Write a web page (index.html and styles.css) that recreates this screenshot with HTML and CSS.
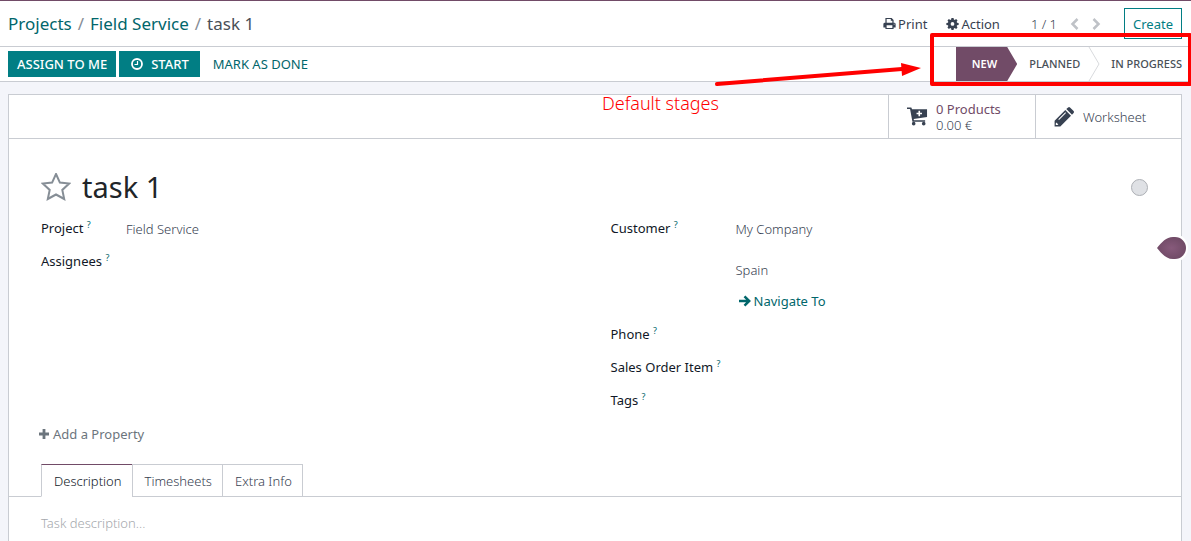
FILE: index.html
```html
<!DOCTYPE html>
<html lang="en">
<head>
<meta charset="utf-8">
<meta name="viewport" content="width=device-width, initial-scale=1">
<title>task 1 - Field Service</title>
<link rel="stylesheet" href="styles.css">
</head>
<body>
<header class="control-panel">
  <nav class="breadcrumb" aria-label="Breadcrumb">
    <a href="#">Projects</a><span class="sep">/</span><a href="#">Field Service</a><span class="sep">/</span><span class="current">task 1</span>
  </nav>
  <div class="panel-actions">
    <button class="plain print" type="button">
      <svg class="icon gear" viewBox="0 0 14 14" aria-hidden="true"><path fill="currentColor" fill-rule="evenodd" d="M2.6 1h6.700l2.100 2.100v3h.6a1.600 1.600 0 0 1 1.600 1.600v3.700h-2.200V13H2.600v-1.600H.4V7.700A1.600 1.600 0 0 1 2 6.100h.6zM3.900 2.200v4h6.200V4H8.400V2.200zM3.900 9v2.800h6.200V9zM11.500 7.200v1h1v-1z"/></svg>
      Print
    </button>
    <button class="plain action" type="button">
      <svg class="icon gear" viewBox="0 0 14 14" aria-hidden="true"><path fill="currentColor" fill-rule="evenodd" d="M5.900 1h2.200l.4 1.700.9.400 1.500-.9 1.500 1.500-.9 1.500.4.900 1.700.3v2.200l-1.700.3-.4.900.9 1.500-1.500 1.500-1.500-.9-.9.400-.4 1.700H5.900l-.4-1.700-.9-.4-1.500.9-1.500-1.500.9-1.500-.4-.9L.4 8.600V6.400l1.700-.3.4-.9-.9-1.500 1.500-1.500 1.500.9.900-.4zM7 5.500a2 2 0 1 0 0 4 2 2 0 0 0 0-4z"/></svg>
      Action
    </button>
    <span class="pager">1 / 1</span>
    <button class="plain arrow" type="button" aria-label="Previous"><svg viewBox="0 0 10 14"><path d="M7.500 2 2.500 7l5 5" /></svg></button>
    <button class="plain arrow" type="button" aria-label="Next"><svg viewBox="0 0 10 14"><path d="m2.500 2 5 5-5 5" /></svg></button>
    <button class="create" type="button">Create</button>
  </div>
</header>

<div class="statusbar">
  <div class="buttons">
    <button class="primary" type="button">ASSIGN TO ME</button>
    <button class="primary start" type="button">
      <svg class="icon" viewBox="0 0 14 14" aria-hidden="true"><g fill="none" stroke="currentColor"><circle cx="7" cy="7" r="5" stroke-width="1.800"/><path d="M7.500 4v3.500H4.500" stroke-width="1.200"/></g></svg>
      START
    </button>
    <button class="link" type="button">MARK AS DONE</button>
  </div>
  <div class="stages">
    <button class="stage active" type="button">NEW</button>
    <button class="stage" type="button">PLANNED</button>
    <svg class="divider" viewBox="0 0 12 34" aria-hidden="true"><path d="M1 0l10 17L1 34" fill="none" stroke="#d8dadd"/></svg>
    <button class="stage last" type="button">IN PROGRESS</button>
  </div>
</div>

<main class="sheet">
  <div class="button-box">
    <button class="stat products" type="button">
      <svg class="cart" viewBox="0 0 22 20" aria-hidden="true"><path fill="currentColor" fill-rule="evenodd" d="M0 0h4.500l.8 2H21v8L7 12l.3 1.500H19V15H5.700L3.200 1.600H0zM12 3.500v2H10v1.700h2v2h1.700v-2h2V5.500h-2v-2z"/><circle cx="7" cy="17" r="1.900" fill="currentColor"/><circle cx="17.500" cy="17" r="1.900" fill="currentColor"/></svg>
      <span class="stat-text"><span class="accent">0 Products</span><span>0.00 €</span></span>
    </button>
    <button class="stat worksheet" type="button">
      <svg class="pencil" viewBox="0 0 20 20" aria-hidden="true"><path fill="currentColor" fill-rule="evenodd" d="M11.300 3l5.700 5.700L6.300 19.400H.6v-5.700zM2.300 15.500l-.5 1.100v1.500h1.500l1.100-.5zM11.300 5.300l-7 7 .7.700 7-7zM12.300 2L14.100.4q1-.8 1.900 0l3.600 3.600q.8.900 0 1.900L18 7.700z"/></svg>
      Worksheet
    </button>
  </div>

  <div class="content">
    <div class="title-row">
      <button class="plain star" type="button" aria-label="Priority"><svg viewBox="0 0 30 28"><path d="M15 1l3.900 8.600 9.300 1-6.900 6.300 1.900 9.100-8.200-4.500L6.800 26l1.900-9.100-6.900-6.300 9.300-1z" fill="none" stroke="currentColor" stroke-width="2"/></svg></button>
      <h1>task 1</h1>
      <button class="plain state" type="button" aria-label="State"></button>
    </div>

    <div class="groups">
      <dl class="group left">
        <dt>Project <sup>?</sup></dt><dd>Field Service</dd>
        <dt>Assignees <sup>?</sup></dt><dd></dd>
      </dl>
      <dl class="group right">
        <dt>Customer <sup>?</sup></dt>
        <dd class="address"><span>My Company</span><span class="country">Spain</span>
          <a class="navigate" href="#"><svg viewBox="0 0 12 12" aria-hidden="true"><path d="M0 6h10M5.500 1.300L10.200 6l-4.700 4.700" fill="none" stroke="currentColor" stroke-width="2.500"/></svg>Navigate To</a></dd>
        <dt>Phone <sup>?</sup></dt><dd></dd>
        <dt>Sales Order Item <sup>?</sup></dt><dd></dd>
        <dt>Tags <sup>?</sup></dt><dd></dd>
      </dl>
    </div>

    <button class="plain add-property" type="button"><svg viewBox="0 0 10 10" aria-hidden="true"><path d="M5 0v10M0 5h10" stroke="currentColor" stroke-width="2.800"/></svg>Add a Property</button>
  </div>

  <div class="tabs" role="tablist">
    <button class="tab selected" type="button" role="tab" aria-selected="true">Description</button>
    <button class="tab" type="button" role="tab" aria-selected="false">Timesheets</button>
    <button class="tab" type="button" role="tab" aria-selected="false">Extra Info</button>
  </div>
  <textarea class="description" rows="1" aria-label="Task description" placeholder="Task description..."></textarea>
</main>

<svg class="tip" viewBox="0 0 36 32" aria-hidden="true"><defs><radialGradient id="tip-fill"><stop offset="0" stop-color="#875a7b"/><stop offset="1" stop-color="#714b67"/></radialGradient></defs><circle cx="20" cy="16" r="14" fill="#fff"/><path d="M3 16C8 10 12 5 19 5h2a11 11 0 0 1 0 22h-2C12 27 8 22 3 16z" fill="url(#tip-fill)"/></svg>

<div class="note">Default stages</div>
<svg class="note-arrow" viewBox="0 0 208 28" aria-hidden="true"><path d="M3 22L188 7" stroke="red" stroke-width="4" stroke-linecap="round"/><path d="M187 1l20 5-19 8z" fill="red"/></svg>
<div class="note-frame"></div>
</body>
</html>
```
FILE: styles.css
```css
* { box-sizing: border-box; }

html { height: 100%; }

body {
  position: relative;
  display: flex;
  flex-direction: column;
  min-height: 100%;
  margin: 0;
  overflow: hidden;
  background: #f4f5fa;
  color: #374151;
  font: 300 13px/16px "Noto Sans", "Open Sans", sans-serif;
}

button {
  margin: 0;
  padding: 0;
  border: 0;
  background: none;
  color: inherit;
  font: inherit;
  white-space: nowrap;
  cursor: pointer;
}

a { color: #01666b; text-decoration: none; }
svg { flex: none; }
.icon { width: 14px; height: 14px; }
.gear { width: 13px; height: 13px; }

.plain {
  display: inline-flex;
  align-items: center;
  gap: 2px;
}

.control-panel {
  display: flex;
  justify-content: space-between;
  align-items: center;
  height: 47px;
  padding: 0 9px 0 8px;
  border-top: 1px solid #714b67;
  border-bottom: 1px solid #c9ccd2;
  background: #fff;
}

.breadcrumb { font-size: 17px; font-weight: 400; line-height: 24px; color: #495057; }
.sep { margin: 0 6px; color: #868e96; }

.panel-actions { display: flex; align-items: center; }
.print, .action { font-weight: 400; }
.action { margin-left: 19px; }
.pager { margin: 0 12px 0 31px; }
.arrow { margin-right: 9px; color: #bfc2c7; }
.arrow svg { width: 12px; height: 14px; }
.arrow path { fill: none; stroke: currentColor; stroke-width: 2.5; }

.create {
  height: 31px;
  margin-left: 13px;
  padding: 0 8px;
  border: 1px solid #017e84;
  color: #017e84;
  font-weight: 400;
}

.statusbar {
  display: flex;
  justify-content: space-between;
  height: 35px;
  padding: 0 9px 0 8px;
  border-bottom: 1px solid #c9ccd2;
  background: #fff;
}

.buttons { display: flex; align-items: center; gap: 3px; }
.buttons button { height: 26px; }
.primary { padding: 0 9px; background: #017e84; color: #fff; font-weight: 500; }
.start { display: flex; align-items: center; gap: 7px; padding: 0 11px; }
.link { padding: 0 10px; color: #01666b; font-weight: 400; }

.stages { display: flex; color: #495057; font-size: 11px; font-weight: 500; }

.stage { padding: 0 8px 0 12px; }

.stage.active {
  padding: 0 20px 0 16px;
  background: #714b67;
  color: #fff;
  font-weight: 600;
  clip-path: polygon(0 0, calc(100% - 10px) 0, 100% 50%, calc(100% - 10px) 100%, 0 100%);
}

.stage.last { padding: 0 0 0 11px; }
.divider { width: 12px; height: 34px; }

.sheet {
  flex: 1;
  margin: 12px 9px 0 8px;
  border: 1px solid #c9ccd2;
  border-bottom: 0;
  background: #fff;
}

.button-box {
  display: flex;
  justify-content: flex-end;
  height: 44px;
  border-bottom: 1px solid #c9ccd2;
}

.stat {
  display: flex;
  align-items: center;
  width: 147px;
  border-left: 1px solid #c9ccd2;
  text-align: left;
}

.stat:last-child { width: 146px; }
.products { padding-left: 18px; gap: 8px; }
.worksheet { padding-left: 18px; gap: 9px; }
.cart { width: 21px; height: 20px; }
.pencil { width: 20px; height: 20px; }
.stat-text { display: flex; flex-direction: column; line-height: 16px; }
.accent { color: #714b67; font-weight: 400; }

.content { padding: 30px 33px 0 32px; }

.title-row { display: flex; align-items: center; height: 36px; }
.star { color: #868e96; }
.star svg { width: 30px; height: 28px; }
h1 { margin: 0 auto 0 11px; color: #212529; font-size: 29px; font-weight: 400; line-height: 36px; }

.state {
  width: 17px;
  height: 17px;
  border: 1px solid #adb0b5;
  border-radius: 50%;
  background: #dfe1e5;
}

.groups {
  display: grid;
  grid-template-columns: 1fr 1fr;
  gap: 20px;
  min-height: 221px;
  padding-top: 13px;
}

.group {
  display: grid;
  align-content: start;
  row-gap: 13px;
  margin: 0;
}

.left { grid-template-columns: 85px 1fr; }
.right { grid-template-columns: 125px 1fr; padding-left: 6px; }
dt { height: 20px; color: #111827; font-weight: 400; line-height: 20px; white-space: nowrap; }
dd { height: 20px; margin: 0; line-height: 22px; }
sup { color: #01666b; font-size: 9px; line-height: 0; vertical-align: 5px; }
.address { display: flex; flex-direction: column; align-items: flex-start; height: 93px; }
.country { margin-top: 19px; }
.navigate { display: flex; align-items: center; gap: 3px; margin: 9px 0 0 3px; font-weight: 400; }
.navigate svg { width: 12px; height: 12px; }

.add-property { gap: 4px; margin-left: -2px; color: #6c757d; font-weight: 400; }
.add-property svg { width: 10px; height: 10px; }

.tabs {
  display: flex;
  margin-top: 22px;
  padding-left: 32px;
  border-bottom: 1px solid #c9ccd2;
}

.tab {
  height: 33px;
  margin: 0 0 -1px -1px;
  padding: 0 10px 0 12px;
  border: 1px solid #c9ccd2;
}

.tab.selected {
  margin-left: 0;
  border-top-color: #714b67;
  border-bottom-color: #fff;
  color: #111827;
}

.description {
  display: block;
  width: 100%;
  height: 40px;
  padding: 18px 32px 0;
  border: 0;
  outline: 0;
  background: none;
  color: inherit;
  font: inherit;
  resize: none;
}

.description::placeholder { color: #a5a8ad; opacity: 1; }

.tip { position: absolute; top: 232px; right: 1px; width: 36px; height: 32px; }

.note {
  position: absolute;
  top: 92px;
  right: 472px;
  color: red;
  font-size: 18px;
  font-weight: 300;
  line-height: 22px;
}

.note-arrow { position: absolute; top: 62px; right: 269px; width: 208px; height: 28px; }

.note-frame {
  position: absolute;
  top: 33px;
  right: -1px;
  width: 262px;
  height: 53px;
  border: 4px solid red;
  border-radius: 2px;
}
```
